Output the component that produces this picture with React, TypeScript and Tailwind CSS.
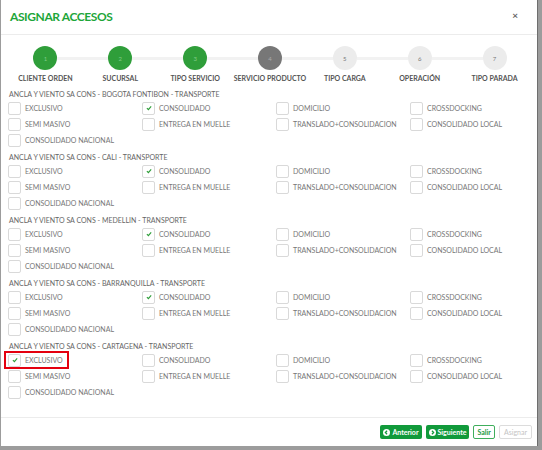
import React from "react";

const steps = [
  { n: 1, label: "CLIENTE ORDEN", state: "done" },
  { n: 2, label: "SUCURSAL", state: "done" },
  { n: 3, label: "TIPO SERVICIO", state: "done" },
  { n: 4, label: "SERVICIO PRODUCTO", state: "current" },
  { n: 5, label: "TIPO CARGA", state: "todo" },
  { n: 6, label: "OPERACIÓN", state: "todo" },
  { n: 7, label: "TIPO PARADA", state: "todo" },
];

const options = [
  "EXCLUSIVO",
  "CONSOLIDADO",
  "DOMICILIO",
  "CROSSDOCKING",
  "SEMI MASIVO",
  "ENTREGA EN MUELLE",
  "TRANSLADO+CONSOLIDACION",
  "CONSOLIDADO LOCAL",
  "CONSOLIDADO NACIONAL",
];

const groups = [
  { title: "ANCLA Y VIENTO SA CONS - BOGOTA FONTIBON - TRANSPORTE", checked: "CONSOLIDADO" },
  { title: "ANCLA Y VIENTO SA CONS - CALI - TRANSPORTE", checked: "CONSOLIDADO" },
  { title: "ANCLA Y VIENTO SA CONS - MEDELLIN - TRANSPORTE", checked: "CONSOLIDADO" },
  { title: "ANCLA Y VIENTO SA CONS - BARRANQUILLA - TRANSPORTE", checked: "CONSOLIDADO" },
  { title: "ANCLA Y VIENTO SA CONS - CARTAGENA - TRANSPORTE", checked: "EXCLUSIVO", mark: true },
];

const Check = () => (
  <svg viewBox="0 0 10 10" width="6" height="6">
    <path d="M1.5 5.2 L4 7.6 L8.6 2.4" stroke="#2f9e3a" strokeWidth="2" fill="none" />
  </svg>
);

const Option = ({ label, on, mark }: { label: string; on: boolean; mark?: boolean }) => (
  <div className="relative flex items-center h-[16px]">
    <div className="w-[13px] h-[13px] border border-[#d9d9d9] rounded-[2px] bg-white flex items-center justify-center shrink-0">
      {on && <Check />}
    </div>
    <span className="ml-[4px] text-[7px] text-[#777] whitespace-nowrap">{label}</span>
    {mark && (
      <div className="absolute left-[-4px] top-[-1px] w-[65px] h-[18px] border-2 border-[#e4000f]" />
    )}
  </div>
);

const ArrowCircle = ({ dir }: { dir: "left" | "right" }) => (
  <svg viewBox="0 0 10 10" width="7" height="7" className="mr-[2px]">
    <circle cx="5" cy="5" r="5" fill="white" />
    <path
      d={dir === "left" ? "M5.8 2.6 L3.4 5 L5.8 7.4" : "M4.2 2.6 L6.6 5 L4.2 7.4"}
      stroke="#119a3b"
      strokeWidth="1.8"
      fill="none"
    />
  </svg>
);

export default function App() {
  return (
    <div className="w-[542px] h-[450px] bg-[#9c9c9c] pl-[1px] pr-[4px] pb-[4px] font-['Lato',sans-serif]">
      <div className="w-full h-full bg-white flex flex-col border-r border-[#6e6e6e]">
        {/* Header */}
        <div className="h-[35px] border-b border-[#ececec] flex items-center justify-between pl-[9px] pr-[19px]">
          <h1 className="text-[12px] font-bold text-[#1ea63a] tracking-[-0.4px]">ASIGNAR ACCESOS</h1>
          <span className="text-[10px] font-bold text-[#666] mt-[-4px]">×</span>
        </div>

        {/* Body */}
        <div className="flex-1 px-[7px] pt-[11px]">
          {/* Stepper */}
          <div className="grid grid-cols-7 w-[524px]">
            {steps.map((s, i) => (
              <div key={s.n} className="flex flex-col items-center">
                <div className="flex items-center w-full">
                  <div className={`flex-1 h-[3px] ${i === 0 ? "" : "bg-[#f2f2f2]"}`} />
                  <div
                    className={`w-[24px] h-[24px] rounded-full flex items-center justify-center text-[6px] ${
                      s.state === "done"
                        ? "bg-[#2f9e3a] text-[#7fcb86]"
                        : s.state === "current"
                        ? "bg-[#777] text-[#aaa]"
                        : "bg-[#ececec] text-[#777]"
                    }`}
                  >
                    {s.n}
                  </div>
                  <div className={`flex-1 h-[3px] ${i === steps.length - 1 ? "" : "bg-[#f2f2f2]"}`} />
                </div>
                <div className="h-[12px] mt-[2px] flex items-center text-[7px] font-bold text-[#555] whitespace-nowrap">
                  {s.label}
                </div>
              </div>
            ))}
          </div>

          {/* Groups */}
          <div className="mt-[4px]">
            {groups.map((g) => (
              <div key={g.title} className="mb-[3px]">
                <div className="h-[12px] flex items-center text-[7px] text-[#666] whitespace-nowrap pl-[1px]">{g.title}</div>
                <div className="grid grid-cols-[134px_134px_134px_1fr]">
                  {options.map((o) => (
                    <Option key={o} label={o} on={o === g.checked} mark={g.mark && o === g.checked} />
                  ))}
                </div>
              </div>
            ))}
          </div>
        </div>

        {/* Footer */}
        <div className="h-[29px] border-t border-[#ececec] flex items-center justify-end gap-[4px] pr-[5px]">
          <button className="h-[14px] px-[3px] bg-[#119a3b] rounded-[2px] flex items-center text-[7px] font-bold text-white">
            <ArrowCircle dir="left" />
            Anterior
          </button>
          <button className="h-[14px] px-[3px] bg-[#119a3b] rounded-[2px] flex items-center text-[7px] font-bold text-white">
            <ArrowCircle dir="right" />
            Siguiente
          </button>
          <button className="h-[14px] px-[3px] border border-[#3fae5c] rounded-[2px] flex items-center text-[7px] font-bold text-[#239a44] bg-white">
            Salir
          </button>
          <button className="h-[14px] px-[4px] border border-[#dcdcdc] rounded-[2px] flex items-center text-[7px] text-[#c4c4c4] bg-white">
            Asignar
          </button>
        </div>
      </div>
    </div>
  );
}
